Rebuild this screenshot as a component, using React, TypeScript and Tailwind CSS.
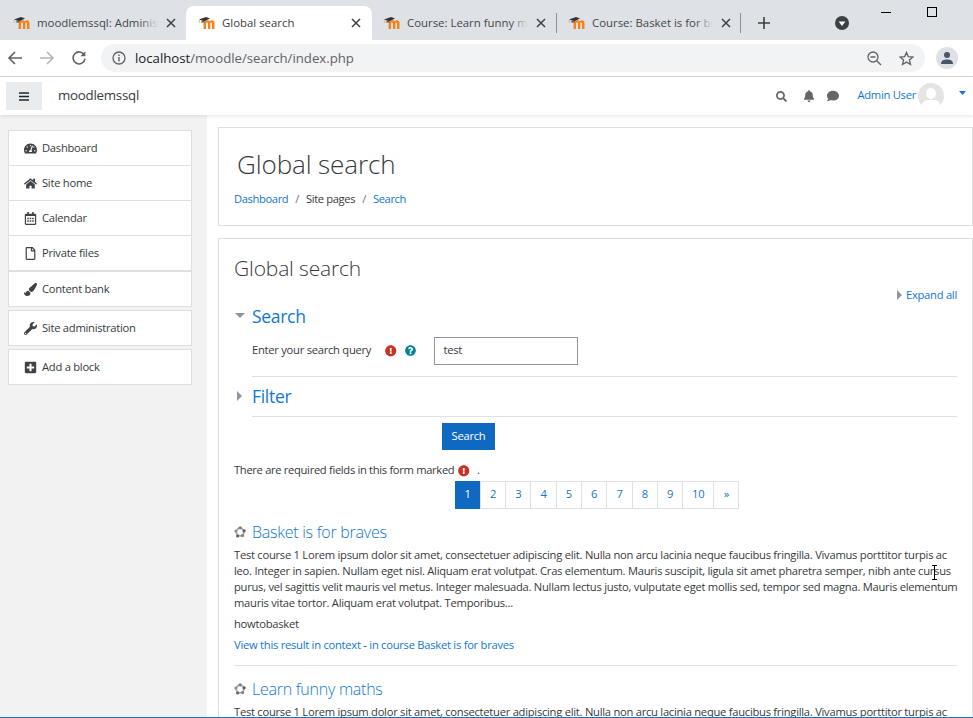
import React from "react";
import { FaTachometerAlt, FaHome, FaRegCalendarAlt, FaRegFile, FaPaintBrush, FaWrench, FaPlusSquare, FaSearch, FaBell, FaComment, FaExclamationCircle, FaQuestionCircle } from "react-icons/fa";

const sans = "font-['Open_Sans','Noto_Sans',sans-serif]";

function MoodleLogo({ faded }: { faded?: boolean }) {
  return (
    <svg width="17" height="14" viewBox="0 0 17 14" className={faded ? "shrink-0 opacity-70" : "shrink-0"}>
      <path d="M7 5.2 C8.4 3.8 10.8 3.8 11.8 5.2 C13 3.8 16.5 3.6 16.5 7 V13 H14 V7.6 C14 6 12.3 6 12.3 7.6 V13 H10 V7.6 C10 6 8 6 8 7.6 V13 H5.6 V7 Z" fill="#f98012" />
      <path d="M1 3.4 L8 1 L12 2.6 L6.5 5.2 Z" fill="#333" />
      <path d="M3.5 4.6 L3.5 7 C4.5 6.4 5.8 6.4 6.8 6.8 L6.8 5.4 Z" fill="#555" />
      <path d="M1.4 3.6 V7" stroke="#f9a35a" strokeWidth="0.8" />
    </svg>
  );
}

function Close() {
  return (
    <svg width="10" height="10" viewBox="0 0 10 10" className="shrink-0">
      <path d="M1 1 L9 9 M9 1 L1 9" stroke="#3c4043" strokeWidth="1.5" />
    </svg>
  );
}

function Tab({ title, active, sep, w, pl }: { title: string; active?: boolean; sep?: boolean; w: string; pl: string }) {
  return (
    <div className={`relative flex h-[34px] items-center ${w} ${pl} ${active ? "rounded-t-[8px] bg-white" : ""}`}>
      <MoodleLogo />
      <div className={`relative ml-[7px] w-[121px] overflow-hidden whitespace-nowrap text-[11.4px] ${active ? "text-[#3c4043]" : "text-[#45474a]"}`}>
        {title}
        {!active && <div className="absolute inset-y-0 right-0 w-[18px] bg-gradient-to-r from-transparent to-[#dee1e6]" />}
      </div>
      <div className="ml-[8px]"><Close /></div>
      {sep && <div className="absolute right-0 top-[7px] h-[20px] w-px bg-[#8f9296]" />}
    </div>
  );
}

function SideItem({ icon, label, extra }: { icon: React.ReactNode; label: string; extra?: string }) {
  return (
    <div className={`flex h-[36px] items-center border border-[#dfdfdf] bg-white pl-[15px] text-[11.2px] tracking-[-0.26px] text-[#373a3c] ${extra ?? ""}`}>
      <span className="flex w-[18px] shrink-0 items-center text-[13px] text-[#3f4347]">{icon}</span>
      <span>{label}</span>
    </div>
  );
}

function CourseIcon() {
  return (
    <svg width="12" height="12" viewBox="0 0 12 12" className="shrink-0">
      <circle cx="6" cy="6" r="3.8" fill="none" stroke="#a8a8a8" strokeWidth="1.8" />
      <circle cx="6.2" cy="1.8" r="1.6" fill="#7d7d7d" />
      <circle cx="10.1" cy="4.8" r="1.6" fill="#5f5f5f" />
      <circle cx="8.6" cy="9.6" r="1.6" fill="#858585" />
      <circle cx="3.6" cy="10" r="1.6" fill="#666" />
      <circle cx="1.9" cy="5" r="1.6" fill="#929292" />
    </svg>
  );
}

function CaretDown({ cls }: { cls?: string }) {
  return (
    <svg width="10" height="5" viewBox="0 0 10 5" className={cls}>
      <path d="M0 0 H10 L5 5 Z" fill="#8f959e" />
    </svg>
  );
}

function CaretRight({ cls }: { cls?: string }) {
  return (
    <svg width="5" height="10" viewBox="0 0 5 10" className={cls}>
      <path d="M0 0 L5 5 L0 10 Z" fill="#8f959e" />
    </svg>
  );
}

const pages = ["1", "2", "3", "4", "5", "6", "7", "8", "9", "10", "»"];

export default function App() {
  return (
    <div className={`relative flex h-[718px] w-[973px] flex-col overflow-hidden bg-white ${sans}`}>
      {/* browser tabs */}
      <div className="relative flex h-[40px] shrink-0 items-end bg-[#dee1e6]">
        <Tab title="moodlemssql: Administration" w="w-[186px]" pl="pl-[13px]" />
        <Tab title="Global search" active w="w-[186px]" pl="pl-[12px]" />
        <Tab title="Course: Learn funny maths" sep w="w-[185px]" pl="pl-[11px]" />
        <Tab title="Course: Basket is for braves" sep w="w-[184px]" pl="pl-[11px]" />
        <div className="flex h-[34px] items-center pl-[17px]">
          <svg width="12" height="12" viewBox="0 0 12 12"><path d="M6 0 V12 M0 6 H12" stroke="#3c4043" strokeWidth="1.6" /></svg>
        </div>
        <div className="flex h-[34px] items-center pl-[65px]">
          <svg width="14" height="14" viewBox="0 0 14 14"><circle cx="7" cy="7" r="7" fill="#3c4043" /><path d="M3.6 5.4 H10.4 L7 10 Z" fill="#fff" /></svg>
        </div>
        <div className="absolute left-[881px] top-[12px] h-px w-[10px] bg-black" />
        <div className="absolute left-[927px] top-[7px] h-[10px] w-[10px] border border-black" />
      </div>

      {/* browser toolbar */}
      <div className="flex h-[37px] shrink-0 items-center border-b border-[#d6d6d6] bg-white">
        <svg width="16" height="16" viewBox="0 0 16 16" className="ml-[7px]"><path d="M15 8 H2 M8 2 L2 8 L8 14" fill="none" stroke="#5f6368" strokeWidth="1.6" /></svg>
        <svg width="16" height="16" viewBox="0 0 16 16" className="ml-[16px]"><path d="M1 8 H14 M8 2 L14 8 L8 14" fill="none" stroke="#b4b7ba" strokeWidth="1.6" /></svg>
        <svg width="16" height="16" viewBox="0 0 16 16" className="ml-[16px]"><path d="M13.4 5.2 A6 6 0 1 0 14 8.6" fill="none" stroke="#5f6368" strokeWidth="1.6" /><path d="M14.4 1.2 V6.2 H9.4 Z" fill="#5f6368" /></svg>
        <div className="ml-[14px] flex h-[28px] w-[824px] items-center rounded-full bg-[#f1f3f4] pl-[11px] pr-[11px]">
          <svg width="14" height="14" viewBox="0 0 14 14"><circle cx="7" cy="7" r="6" fill="none" stroke="#5f6368" strokeWidth="1.3" /><path d="M7 6 V10.4 M7 3.6 V5" stroke="#5f6368" strokeWidth="1.4" /></svg>
          <span className="ml-[9px] translate-y-px text-[13.2px] text-[#5f6368]"><span className="text-[#202124]">localhost</span>/moodle/search/index.php</span>
          <svg width="15" height="15" viewBox="0 0 15 15" className="ml-auto"><circle cx="6" cy="6" r="5" fill="none" stroke="#5f6368" strokeWidth="1.3" /><path d="M3.5 6 H8.5 M9.7 9.7 L14 14" stroke="#5f6368" strokeWidth="1.4" /></svg>
          <svg width="15" height="15" viewBox="0 0 15 15" className="ml-[17px]"><path d="M7.5 1.4 L9.3 5.6 L13.9 6 L10.4 9 L11.5 13.5 L7.5 11.1 L3.5 13.5 L4.6 9 L1.1 6 L5.7 5.6 Z" fill="none" stroke="#5f6368" strokeWidth="1.3" /></svg>
        </div>
        <div className="ml-[11px] flex h-[22px] w-[22px] items-center justify-center rounded-full bg-[#dee1e6]">
          <svg width="14" height="14" viewBox="0 0 14 14"><circle cx="7" cy="4" r="3" fill="#4a5568" /><path d="M1 13 C1 9 4 8.4 7 8.4 C10 8.4 13 9 13 13 Z" fill="#4a5568" /></svg>
        </div>
      </div>

      {/* moodle navbar */}
      <div className="relative z-10 flex h-[38px] shrink-0 items-center bg-white pl-[6px] shadow-[0_2px_3px_rgba(0,0,0,0.07)]">
        <div className="flex h-[28px] w-[36px] items-center justify-center bg-[#e9ecef]">
          <svg width="10" height="9" viewBox="0 0 10 9"><path d="M0 1 H10 M0 4.5 H10 M0 8 H10" stroke="#212529" strokeWidth="1.6" /></svg>
        </div>
        <span className="ml-[16px] text-[13.3px] tracking-[-0.25px] text-[#373a3c]">moodlemssql</span>
        <div className="ml-auto flex items-center pr-[7px]">
          <FaSearch className="text-[11px] text-[#666]" />
          <FaBell className="ml-[16px] text-[12px] text-[#666]" />
          <FaComment className="ml-[12px] text-[12px] text-[#666]" />
          <span className="ml-[18px] -translate-y-px text-[11.2px] tracking-[-0.26px] text-[#1177d1]">Admin User</span>
          <div className="relative ml-[2px] h-[26px] w-[26px] overflow-hidden rounded-full bg-[#e4e4e4]">
            <div className="absolute left-[8px] top-[5px] h-[11px] w-[10px] rounded-full bg-white" />
            <div className="absolute left-[3px] top-[17px] h-[14px] w-[20px] rounded-full bg-white" />
          </div>
          <svg width="7" height="4" viewBox="0 0 7 4" className="ml-[15px] -translate-y-[3px]"><path d="M0 0 H7 L3.5 4 Z" fill="#1177d1" /></svg>
        </div>
      </div>

      <div className="flex min-h-0 flex-1">
        {/* sidebar */}
        <aside className="flex w-[207px] shrink-0 flex-col bg-[#f2f2f2] pl-[8px] pr-[15px] pt-[15px]">
          <SideItem icon={<FaTachometerAlt />} label="Dashboard" />
          <SideItem icon={<FaHome />} label="Site home" extra="-mt-px" />
          <SideItem icon={<FaRegCalendarAlt />} label="Calendar" extra="-mt-px" />
          <SideItem icon={<FaRegFile />} label="Private files" extra="-mt-px" />
          <SideItem icon={<FaPaintBrush />} label="Content bank" />
          <SideItem icon={<FaWrench />} label="Site administration" extra="mt-[3px]" />
          <SideItem icon={<FaPlusSquare />} label="Add a block" extra="mt-[3px]" />
        </aside>

        {/* main */}
        <main className="flex min-w-0 flex-1 flex-col pl-[11px] pt-[12px]">
          <section className="h-[99px] shrink-0 border border-[#dfdfdf] pl-[15px] pt-[17px]">
            <h1 className="pl-[3px] text-[26px] font-light leading-[38px] tracking-[-0.1px] text-[#373a3c]">Global search</h1>
            <div className="mt-[8px] flex items-center text-[11.2px] tracking-[-0.38px] text-[#373a3c]">
              <span className="text-[#1177d1]">Dashboard</span>
              <span className="mx-[7px] text-[#6a737b]">/</span>
              <span>Site pages</span>
              <span className="mx-[7px] text-[#6a737b]">/</span>
              <span className="text-[#1177d1]">Search</span>
            </div>
          </section>

          <section className="mt-[12px] min-h-0 flex-1 border border-[#dfdfdf] pl-[15px] pr-[15px] pt-[13px] text-[11.2px] tracking-[-0.26px] text-[#373a3c]">
            <h2 className="text-[21px] font-light leading-[32px] tracking-[-0.15px]">Global search</h2>
            <div className="mt-[3px] flex items-center justify-end text-[#1177d1]">
              <CaretRight cls="mr-[4px]" />
              <span>Expand all</span>
            </div>

            <div className="-mt-px flex h-[26px] items-center">
              <span className="flex w-[18px] pl-px"><CaretDown /></span>
              <span className="text-[17.5px] leading-[26px] tracking-[-0.3px] text-[#1177d1]">Search</span>
            </div>
            <div className="ml-[18px] border-b border-[#dee2e6] pb-[11px] pt-[8px]">
              <div className="flex items-center">
                <span className="w-[133px]">Enter your search query</span>
                <FaExclamationCircle className="text-[11.5px] text-[#ca3120]" />
                <FaQuestionCircle className="ml-[8px] text-[11px] text-[#008196]" />
                <div className="ml-[18px] flex h-[28px] w-[144px] items-center border border-[#8f959e] pl-[9px]">test</div>
              </div>
            </div>

            <div className="mt-[6px] flex h-[26px] items-center">
              <span className="flex w-[18px] pl-[3px]"><CaretRight /></span>
              <span className="text-[17.5px] leading-[26px] tracking-[-0.3px] text-[#1177d1]">Filter</span>
            </div>
            <div className="ml-[18px] mt-[7px] border-b border-[#dee2e6]" />

            <div className="mt-[6px] pl-[208px]">
              <div className="flex h-[27px] w-[53px] items-center justify-center bg-[#1069c0] text-white">Search</div>
            </div>

            <div className="mt-[13px] flex h-[16px] items-center">
              <span className="tracking-[-0.32px]">There are required fields in this form marked</span>
              <FaExclamationCircle className="ml-[4px] text-[11.5px] text-[#ca3120]" />
              <span className="ml-[7px]">.</span>
            </div>

            <div className="mt-[2px] flex justify-center pl-[3px]">
              {pages.map((p, i) => (
                <div
                  key={p}
                  className={`flex h-[28px] items-center justify-center border text-[#1177d1] ${
                    p === "10" ? "w-[32px]" : "w-[26.3px]"
                  } ${i > 0 ? "-ml-px" : ""} ${i === 0 ? "border-[#1069c0] bg-[#1069c0] text-white" : "border-[#dee2e6]"}`}
                >
                  {p}
                </div>
              ))}
            </div>

            <div className="mt-[13px] flex h-[20px] items-center">
              <CourseIcon />
              <span className="ml-[6px] text-[16px] font-light tracking-[-0.25px] text-[#1177d1]">Basket is for braves</span>
            </div>
            <p className="mt-[5px] whitespace-nowrap leading-[16px]">
              Test course 1 Lorem ipsum dolor sit amet, consectetuer adipiscing elit. Nulla non arcu lacinia neque faucibus fringilla. Vivamus porttitor turpis ac<br />
              leo. Integer in sapien. Nullam eget nisl. Aliquam erat volutpat. Cras elementum. Mauris suscipit, ligula sit amet pharetra semper, nibh ante cursus<br />
              purus, vel sagittis velit mauris vel metus. Integer malesuada. Nullam lectus justo, vulputate eget mollis sed, tempor sed magna. Mauris elementum<br />
              mauris vitae tortor. Aliquam erat volutpat. Temporibus...
            </p>
            <p className="mt-[5px] leading-[16px]">howtobasket</p>
            <p className="mt-[5px] leading-[16px]">
              <span className="text-[#1177d1]">View this result in context</span> - <span className="text-[#1177d1]">in course Basket is for braves</span>
            </p>
            <div className="mt-[12px] border-b border-[#e2e2e2]" />
            <div className="mt-[13px] flex h-[20px] items-center">
              <CourseIcon />
              <span className="ml-[6px] text-[16px] font-light tracking-[-0.25px] text-[#1177d1]">Learn funny maths</span>
            </div>
            <p className="mt-[5px] whitespace-nowrap leading-[16px]">
              Test course 1 Lorem ipsum dolor sit amet, consectetuer adipiscing elit. Nulla non arcu lacinia neque faucibus fringilla. Vivamus porttitor turpis ac
            </p>
          </section>
        </main>
      </div>

      {/* window edge and text cursor */}
      <div className="absolute bottom-0 left-0 h-px w-full bg-[#1a73c8]" />
      <svg width="7" height="15" viewBox="0 0 7 15" className="absolute left-[931px] top-[565px]">
        <path d="M1 0.5 H6 M1 14.5 H6 M3.5 0.5 V14.5" stroke="#000" strokeWidth="1" fill="none" />
      </svg>
    </div>
  );
}
